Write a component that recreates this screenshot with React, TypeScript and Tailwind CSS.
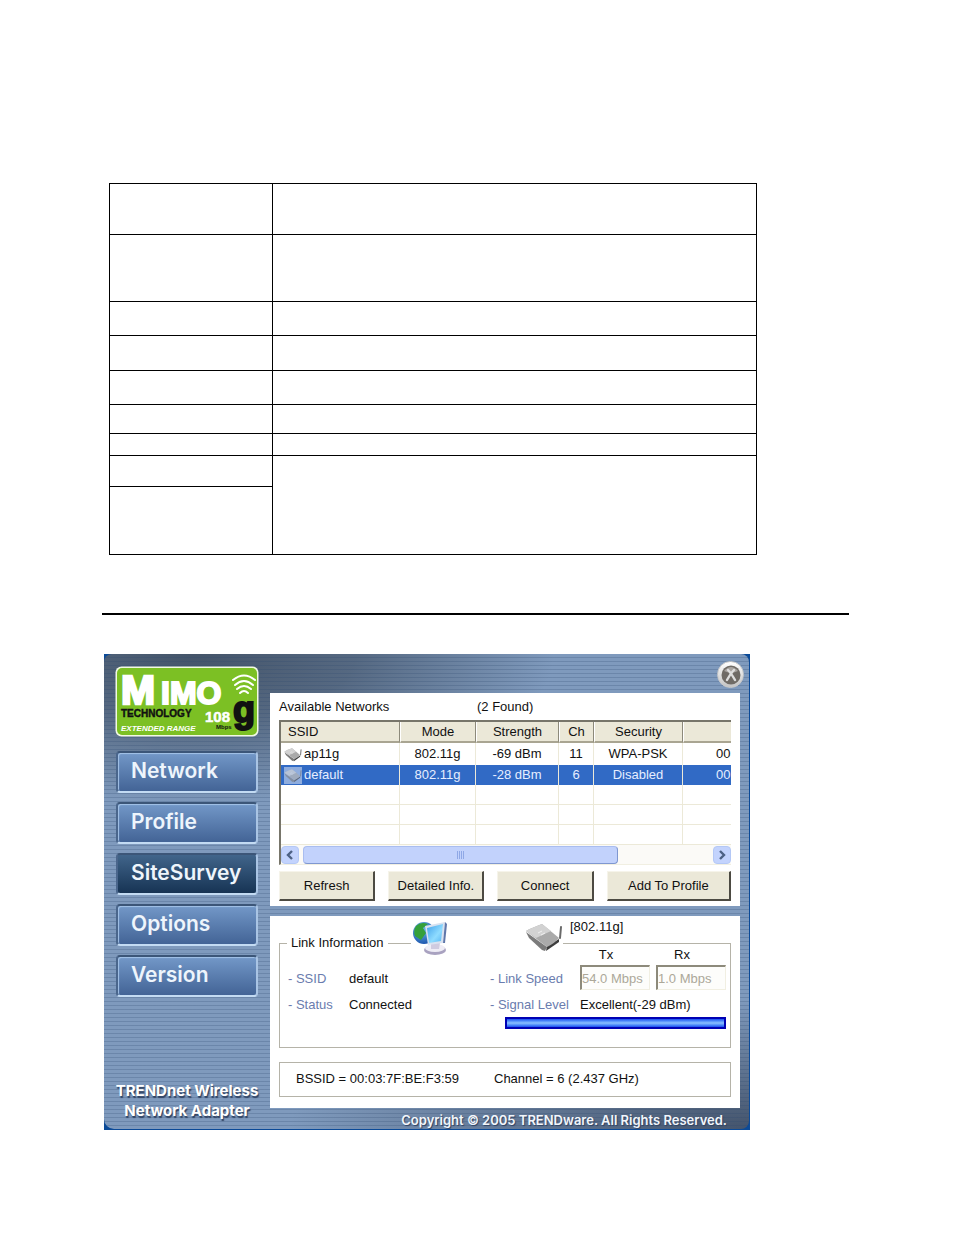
import React, { useState } from 'react';

const NAV_ITEMS = ['Network', 'Profile', 'SiteSurvey', 'Options', 'Version'];

const NETWORKS = [
  { ssid: 'ap11g', mode: '802.11g', strength: '-69 dBm', ch: '11', security: 'WPA-PSK', bssid: '00' },
  { ssid: 'default', mode: '802.11g', strength: '-28 dBm', ch: '6', security: 'Disabled', bssid: '00' },
];

const COLUMNS = ['Mode', 'Strength', 'Ch', 'Security'];

const SPEC_ROWS = ['h-[51px]', 'h-[67px]', 'h-[34px]', 'h-[35px]', 'h-[34px]', 'h-[29px]', 'h-[22px]'];

function SpecTable() {
  return (
    <table className="ml-[7px] w-full max-w-[648px] table-fixed border-collapse">
      <colgroup>
        <col className="w-[163px]" />
        <col />
      </colgroup>
      <tbody>
        {SPEC_ROWS.map((height, i) => (
          <tr key={i} className={height}>
            <td className="border border-black p-0" />
            <td className="border border-black p-0" />
          </tr>
        ))}
        <tr className="h-[31px]">
          <td className="border border-black p-0" />
          <td rowSpan={2} className="border border-black p-0" />
        </tr>
        <tr className="h-[68px]">
          <td className="border border-black p-0" />
        </tr>
      </tbody>
    </table>
  );
}

function MimoLogo() {
  return (
    <svg viewBox="0 0 144 71" className="h-[71px] w-[144px]" role="img" aria-label="MIMO Technology 108 Mbps g">
      <rect x="0.5" y="0.5" width="143" height="70" rx="6" fill="#f2f9e4" />
      <rect x="2" y="2" width="140" height="67" rx="5" fill="#7cc024" />
      <g fontFamily="'Liberation Sans', sans-serif" fontWeight="700">
        <text x="6" y="38" fontSize="41" fill="#fff" stroke="#fff" strokeWidth="2.5">M</text>
        <text x="46" y="38" fontSize="32" fill="#fff" stroke="#fff" strokeWidth="2">IMO</text>
        <text x="6" y="51" fontSize="10" fill="#111" stroke="#111" strokeWidth="0.4">TECHNOLOGY</text>
        <text x="6" y="65" fontSize="8" fontStyle="italic" fill="#fff">EXTENDED RANGE</text>
        <text x="90" y="56" fontSize="15" fill="#fff" stroke="#fff" strokeWidth="0.5">108</text>
        <text x="101" y="63" fontSize="6" fill="#111">Mbps</text>
        <text x="118" y="56" fontSize="36" fill="#111" stroke="#111" strokeWidth="2">g</text>
      </g>
      <g fill="none" stroke="#fff" strokeWidth="2" strokeLinecap="round">
        <path d="M118 14 Q129 5 140 14" />
        <path d="M120 19 Q129 11 138 19" />
        <path d="M122 23 Q129 17 136 23" />
        <path d="M125 27 Q129 23 133 27" />
      </g>
    </svg>
  );
}

function RouterIcon({ className }: { className: string }) {
  return (
    <svg viewBox="0 0 38 32" className={className} aria-hidden="true">
      <path d="M1 11 L22 26 L20 30 L17 29 L4 17 Z" fill="#7b7b7b" />
      <path d="M22 25 L34 18 L34 21 L21 30 Z" fill="#3d3d3d" />
      <path d="M1 10 Q4 8 17 3 L34 17 Q30 22 22 26 Z" fill="#aaaaaa" />
      <path d="M1 10 Q4 8 17 3 L26 10 L11 17 Z" fill="#d2d2d2" />
      <path d="M13 12 l4 -2 M16 14 l4 -2" stroke="#f0f0f0" strokeWidth="1" />
      <path d="M36 6 L35 17" stroke="#6a6a6a" strokeWidth="2" strokeLinecap="round" />
    </svg>
  );
}

function NetworkIcon() {
  return (
    <svg viewBox="0 0 38 36" className="h-9 w-[38px]" aria-hidden="true">
      <defs>
        <linearGradient id="screen" x1="0" y1="0" x2="1" y2="1">
          <stop offset="0" stopColor="#3fa0ea" />
          <stop offset="0.6" stopColor="#8fdcff" />
          <stop offset="1" stopColor="#55b4f2" />
        </linearGradient>
        <radialGradient id="globe" cx="0.4" cy="0.3" r="0.8">
          <stop offset="0" stopColor="#6fc0e8" />
          <stop offset="1" stopColor="#1348a8" />
        </radialGradient>
      </defs>
      <circle cx="13" cy="12" r="11" fill="url(#globe)" />
      <path d="M5 5 Q10 0 17 3 L12 7 L15 12 L10 19 L4 15 Q2 10 5 5 Z" fill="#35a03a" />
      <ellipse cx="24" cy="29" rx="11" ry="5" fill="#a9a2c0" />
      <ellipse cx="24" cy="27" rx="10" ry="4" fill="#efedf6" />
      <path d="M20 21 L29 22 L28 28 L20 28 Z" fill="#cfcbe0" />
      <path d="M14 5 L34 1 L32 22 L17 24 Z" fill="#d9e2f0" />
      <path d="M34 1 L36 3 L34 22 L32 22 Z" fill="#5f77ab" />
      <path d="M16 7 L32 3 L30 20 L18 22 Z" fill="url(#screen)" />
    </svg>
  );
}

function Scrollbar() {
  const endButton =
    'flex h-[18px] w-[18px] items-center justify-center rounded-sm border border-[#b4c8f6] bg-[#c3d3fd] text-[#4d6185]';
  return (
    <div className="flex h-[19px] items-center bg-[#fbfaf7]">
      <button className={endButton} aria-label="Scroll left">
        <svg viewBox="0 0 10 10" className="h-[10px] w-[10px]"><path d="M7 1 L3 5 L7 9" fill="none" stroke="currentColor" strokeWidth="2.4" /></svg>
      </button>
      <div className="ml-1 flex h-[18px] w-[70%] items-center justify-center gap-px rounded-sm border border-[#a9bdf0] border-r-[#7f97d0] border-b-[#7f97d0] bg-[#c2d2fc]">
        {[0, 1, 2, 3].map((n) => (
          <span key={n} className="h-2 w-px bg-[#8fa8e6]" />
        ))}
      </div>
      <button className={`ml-auto ${endButton}`} aria-label="Scroll right">
        <svg viewBox="0 0 10 10" className="h-[10px] w-[10px]"><path d="M3 1 L7 5 L3 9" fill="none" stroke="currentColor" strokeWidth="2.4" /></svg>
      </button>
    </div>
  );
}

function NetworkList() {
  const [selected, setSelected] = useState('default');

  return (
    <div className="mt-[3px] overflow-hidden border-t-2 border-l-2 border-b border-t-[#77756a] border-l-[#77756a] border-b-[#f1efe2]">
      <table className="w-full table-fixed border-separate border-spacing-0">
        <colgroup>
          <col className="w-[119px]" />
          <col className="w-[76px]" />
          <col className="w-[83px]" />
          <col className="w-[35px]" />
          <col className="w-[89px]" />
          <col />
        </colgroup>
        <thead>
          <tr className="h-[21px] bg-[#ebe8d8]">
            <th className="border-r border-b-2 border-r-[#8d8a7b] border-b-[#a9a592] p-0 pl-[7px] text-left font-normal">SSID</th>
            {COLUMNS.map((name) => (
              <th key={name} className="border-r border-b-2 border-l border-l-white border-r-[#8d8a7b] border-b-[#a9a592] p-0 font-normal">
                {name}
              </th>
            ))}
            <th className="border-b-2 border-l border-l-white border-b-[#a9a592] p-0" />
          </tr>
        </thead>
        <tbody>
          {NETWORKS.map((net) => {
            const isSelected = net.ssid === selected;
            return (
              <tr
                key={net.ssid}
                onClick={() => setSelected(net.ssid)}
                className={`text-center ${isSelected ? 'h-5 bg-[#316ac5] text-[#e6eeff]' : 'h-[22px] bg-white'}`}
              >
                <td className="border-r border-[#ece9d8] p-0">
                  <div className="flex items-center gap-[2px] pl-[3px]">
                    <span className={isSelected ? 'bg-[#8fadde]' : ''}>
                      <RouterIcon className={isSelected ? 'h-[17px] w-[18px] opacity-60' : 'h-[17px] w-[18px]'} />
                    </span>
                    {net.ssid}
                  </div>
                </td>
                <td className="border-r border-[#ece9d8] p-0">{net.mode}</td>
                <td className="border-r border-[#ece9d8] p-0">{net.strength}</td>
                <td className="border-r border-[#ece9d8] p-0">{net.ch}</td>
                <td className="border-r border-[#ece9d8] p-0">{net.security}</td>
                <td className="overflow-hidden p-0 pl-[33px] text-left">{net.bssid}</td>
              </tr>
            );
          })}
          {[0, 1, 2].map((row) => (
            <tr key={row} className="h-5">
              {[0, 1, 2, 3, 4].map((cell) => (
                <td key={cell} className="border-r border-b border-[#ece9d8] p-0" />
              ))}
              <td className="border-b border-[#ece9d8] p-0" />
            </tr>
          ))}
        </tbody>
      </table>
      <Scrollbar />
    </div>
  );
}

function ActionButton({ children }: { children: React.ReactNode }) {
  return (
    <button className="h-[30px] border-r-2 border-b-2 border-t border-l border-t-[#f6f4ea] border-l-[#f6f4ea] border-r-[#4c4a42] border-b-[#4c4a42] bg-[#ebe8d8]">
      {children}
    </button>
  );
}

function LinkPanel() {
  const input =
    'h-[25px] w-full min-w-0 border-t-2 border-l-2 border-r border-b border-t-[#8d8a7b] border-l-[#8d8a7b] border-r-[#f1efe2] border-b-[#f1efe2] bg-[#fdfdfb] text-[#aca899]';
  return (
    <section className="relative mt-[10px] mr-[9px] bg-white px-[9px] pb-[11px]">
      <p className="h-[17px] pl-[291px] leading-[22px]">[802.11g]</p>
      <fieldset className="border border-[#b5b3a8] pb-[18px]">
        <legend className="ml-[7px] px-1 leading-5">Link Information</legend>
        <div className="-mt-2 grid grid-cols-[202px_1fr] pl-2">
          <dl className="grid grid-cols-[61px_1fr] content-start pt-[21px] leading-[26px]">
            <dt className="text-[#6a7cae]">- SSID</dt>
            <dd>default</dd>
            <dt className="text-[#6a7cae]">- Status</dt>
            <dd>Connected</dd>
          </dl>
          <div>
            <div className="grid grid-cols-[84px_70px_70px] gap-x-[6px]">
              <span />
              <label htmlFor="tx" className="pr-[18px] text-center leading-5">Tx</label>
              <label htmlFor="rx" className="pr-[18px] text-center leading-5">Rx</label>
              <span className="leading-7 text-[#6a7cae]">- Link Speed</span>
              <input id="tx" disabled defaultValue="54.0 Mbps" className={input} />
              <input id="rx" disabled defaultValue="1.0 Mbps" className={input} />
              <span className="leading-6 text-[#6a7cae]">- Signal Level</span>
              <span className="col-span-2 leading-6">Excellent(-29 dBm)</span>
            </div>
            <div
              role="meter"
              aria-label="Signal Level"
              aria-valuenow={100}
              className="ml-[15px] h-3 w-[221px] border-2 border-[#0000b4] bg-linear-to-b from-[#1c4cf0] via-[#8cc0ff] to-[#1c4cf0]"
            />
          </div>
        </div>
      </fieldset>
      <div className="mt-[14px] grid grid-cols-[198px_1fr] border border-[#b5b3a8] pl-4 leading-[31px] pb-[2px]">
        <span>BSSID = 00:03:7F:BE:F3:59</span>
        <span>Channel = 6 (2.437 GHz)</span>
      </div>
      {/* icons sit on top of the group box border */}
      <div className="absolute top-[5px] left-[141px] flex h-9 w-[152px] justify-between bg-white">
        <NetworkIcon />
        <RouterIcon className="h-8 w-[38px]" />
      </div>
    </section>
  );
}

export default function App() {
  const [page, setPage] = useState('SiteSurvey');

  return (
    <main className="min-h-screen bg-white pt-[183px] pr-[105px] pb-[105px] pl-[102px] font-['Liberation_Sans',Arial,sans-serif] text-[13px] leading-4 text-[#111]">
      <SpecTable />
      <hr className="mt-[58px] h-0.5 border-0 bg-black" />

      <div className="mt-[39px] ml-0.5 max-w-[646px] bg-[#0b4a98] pr-px pb-px">
        <div className="flex rounded-tl-[8px] rounded-tr-[8px] rounded-br-[8px] rounded-bl-[10px] bg-[#7f9abd] bg-[repeating-linear-gradient(to_bottom,transparent_0px,transparent_3px,rgba(45,72,110,0.24)_3px,rgba(45,72,110,0.24)_4px),radial-gradient(ellipse_360px_150px_at_90px_0px,rgba(58,72,90,0.85),rgba(58,72,90,0.6)_45%,transparent),radial-gradient(ellipse_460px_130px_at_100%_100%,rgba(58,72,94,0.85),transparent)]">
          <aside className="flex w-[166px] shrink-0 flex-col pt-3 pb-2">
            <div className="pl-[11px]">
              <MimoLogo />
            </div>
            <nav className="mt-[14px] flex flex-col gap-[9px] pr-3 pl-3">
              {NAV_ITEMS.map((item) => (
                <button
                  key={item}
                  onClick={() => setPage(item)}
                  className={`h-[42px] rounded-[4px] border-t-2 border-l-2 border-r-2 border-b-2 border-t-[#3c5678] border-l-[#4a668c] border-r-[#a9c4e4] border-b-[#c3dbf3] pb-[2px] pl-[13px] text-left font-['Inter',sans-serif] text-[21px] font-semibold text-[#eef5fc] ${
                    item === page
                      ? 'bg-linear-to-b from-[#41658b] to-[#173454]'
                      : 'bg-linear-to-b from-[#7398c8] to-[#436496] shadow-[inset_1px_1px_1px_#a5c4e8]'
                  }`}
                >
                  {item}
                </button>
              ))}
            </nav>
            <p className="mt-auto text-center font-['Inter',sans-serif] text-[15px] leading-5 font-bold text-white [text-shadow:1px_2px_1px_#2f4262]">
              TRENDnet Wireless
              <br />
              Network Adapter
            </p>
          </aside>

          <div className="min-w-0 flex-1">
            <header className="flex h-[39px] justify-end pt-[7px] pr-[5px]">
              <button
                aria-label="Close"
                className="flex h-[27px] w-[27px] items-center justify-center rounded-full border border-[#c9c9c9] bg-linear-to-b from-white to-[#c4c4c4]"
              >
                <svg viewBox="0 0 20 20" className="h-5 w-5">
                  <circle cx="10" cy="10" r="9.5" fill="#6f6b66" />
                  <path d="M3 6 Q10 -2 17 6 Q10 9 3 6 Z" fill="#a8a4a0" />
                  <path d="M7 5 Q10 8 14 15 M13 5 Q10 8 6 15" fill="none" stroke="#dedede" strokeWidth="2.4" strokeLinecap="round" />
                </svg>
              </button>
            </header>

            <section className="mr-[9px] bg-white px-[9px] pt-1 pb-[5px]">
              <div className="grid grid-cols-[198px_1fr] leading-5">
                <h2>Available Networks</h2>
                <span>(2 Found)</span>
              </div>
              <NetworkList />
              <div className="mt-[6px] grid grid-cols-[96fr_96fr_96fr_124fr] gap-[13px]">
                <ActionButton>Refresh</ActionButton>
                <ActionButton>Detailed Info.</ActionButton>
                <ActionButton>Connect</ActionButton>
                <ActionButton>Add To Profile</ActionButton>
              </div>
            </section>

            <LinkPanel />

            <footer className="h-[21px] pr-[22px] text-right font-['Inter',sans-serif] text-[13px] leading-6 font-semibold whitespace-nowrap text-[#f2f6fb] [text-shadow:1px_1px_1px_#2f4262]">
              Copyright © 2005 TRENDware. All Rights Reserved.
            </footer>
          </div>
        </div>
      </div>
    </main>
  );
}
